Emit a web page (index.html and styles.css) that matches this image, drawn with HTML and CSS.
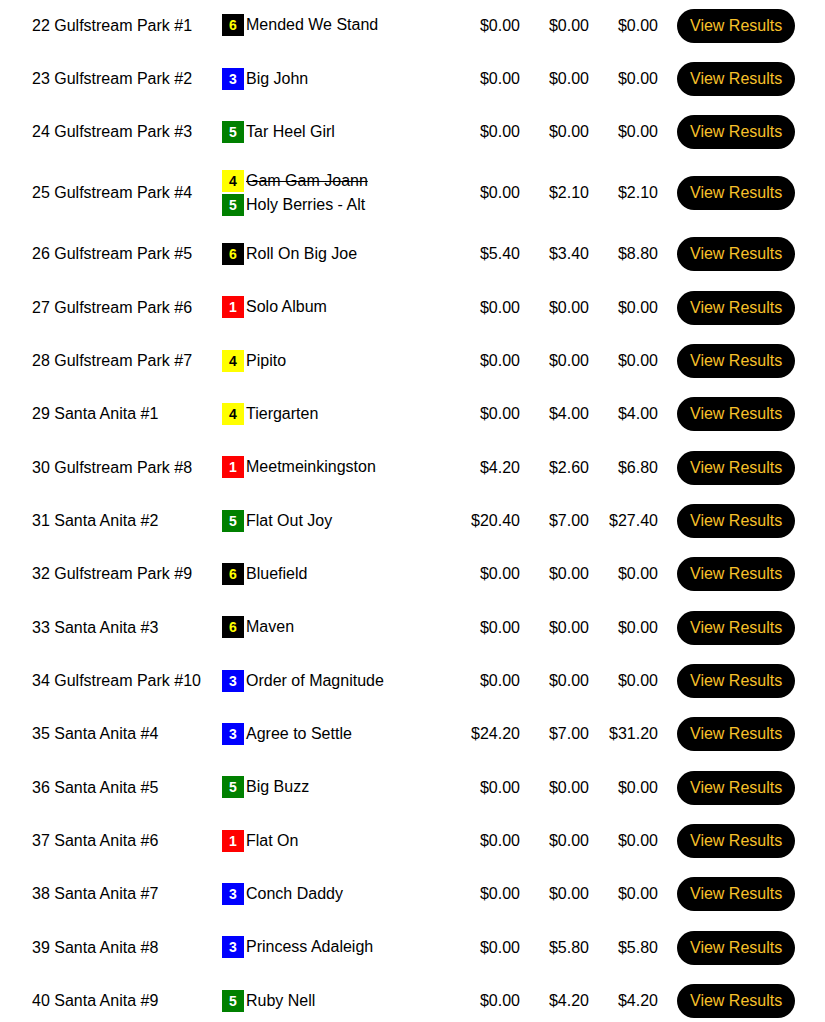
FILE: index.html
```html
<!DOCTYPE html>
<html lang="en">
<head>
<meta charset="utf-8">
<title>Race Results</title>
<link rel="stylesheet" href="styles.css">
</head>
<body>
<table class="results">
  <colgroup>
    <col class="c-race"><col class="c-horse"><col class="c-money1"><col class="c-money"><col class="c-money"><col class="c-btn">
  </colgroup>
  <tbody>
    <tr><td>22 Gulfstream Park #1</td><td><div class="horse"><span class="pp pp6">6</span>Mended We Stand</div></td><td class="m">$0.00</td><td class="m">$0.00</td><td class="m">$0.00</td><td class="b"><a class="btn">View Results</a></td></tr>
    <tr><td>23 Gulfstream Park #2</td><td><div class="horse"><span class="pp pp3">3</span>Big John</div></td><td class="m">$0.00</td><td class="m">$0.00</td><td class="m">$0.00</td><td class="b"><a class="btn">View Results</a></td></tr>
    <tr><td>24 Gulfstream Park #3</td><td><div class="horse"><span class="pp pp5">5</span>Tar Heel Girl</div></td><td class="m">$0.00</td><td class="m">$0.00</td><td class="m">$0.00</td><td class="b"><a class="btn">View Results</a></td></tr>
    <tr><td>25 Gulfstream Park #4</td><td><div class="horse"><span class="pp pp4">4</span><s>Gam Gam Joann</s></div><div class="horse"><span class="pp pp5">5</span>Holy Berries - Alt</div></td><td class="m">$0.00</td><td class="m">$2.10</td><td class="m">$2.10</td><td class="b"><a class="btn">View Results</a></td></tr>
    <tr><td>26 Gulfstream Park #5</td><td><div class="horse"><span class="pp pp6">6</span>Roll On Big Joe</div></td><td class="m">$5.40</td><td class="m">$3.40</td><td class="m">$8.80</td><td class="b"><a class="btn">View Results</a></td></tr>
    <tr><td>27 Gulfstream Park #6</td><td><div class="horse"><span class="pp pp1">1</span>Solo Album</div></td><td class="m">$0.00</td><td class="m">$0.00</td><td class="m">$0.00</td><td class="b"><a class="btn">View Results</a></td></tr>
    <tr><td>28 Gulfstream Park #7</td><td><div class="horse"><span class="pp pp4">4</span>Pipito</div></td><td class="m">$0.00</td><td class="m">$0.00</td><td class="m">$0.00</td><td class="b"><a class="btn">View Results</a></td></tr>
    <tr><td>29 Santa Anita #1</td><td><div class="horse"><span class="pp pp4">4</span>Tiergarten</div></td><td class="m">$0.00</td><td class="m">$4.00</td><td class="m">$4.00</td><td class="b"><a class="btn">View Results</a></td></tr>
    <tr><td>30 Gulfstream Park #8</td><td><div class="horse"><span class="pp pp1">1</span>Meetmeinkingston</div></td><td class="m">$4.20</td><td class="m">$2.60</td><td class="m">$6.80</td><td class="b"><a class="btn">View Results</a></td></tr>
    <tr><td>31 Santa Anita #2</td><td><div class="horse"><span class="pp pp5">5</span>Flat Out Joy</div></td><td class="m">$20.40</td><td class="m">$7.00</td><td class="m">$27.40</td><td class="b"><a class="btn">View Results</a></td></tr>
    <tr><td>32 Gulfstream Park #9</td><td><div class="horse"><span class="pp pp6">6</span>Bluefield</div></td><td class="m">$0.00</td><td class="m">$0.00</td><td class="m">$0.00</td><td class="b"><a class="btn">View Results</a></td></tr>
    <tr><td>33 Santa Anita #3</td><td><div class="horse"><span class="pp pp6">6</span>Maven</div></td><td class="m">$0.00</td><td class="m">$0.00</td><td class="m">$0.00</td><td class="b"><a class="btn">View Results</a></td></tr>
    <tr><td>34 Gulfstream Park #10</td><td><div class="horse"><span class="pp pp3">3</span>Order of Magnitude</div></td><td class="m">$0.00</td><td class="m">$0.00</td><td class="m">$0.00</td><td class="b"><a class="btn">View Results</a></td></tr>
    <tr><td>35 Santa Anita #4</td><td><div class="horse"><span class="pp pp3">3</span>Agree to Settle</div></td><td class="m">$24.20</td><td class="m">$7.00</td><td class="m">$31.20</td><td class="b"><a class="btn">View Results</a></td></tr>
    <tr><td>36 Santa Anita #5</td><td><div class="horse"><span class="pp pp5">5</span>Big Buzz</div></td><td class="m">$0.00</td><td class="m">$0.00</td><td class="m">$0.00</td><td class="b"><a class="btn">View Results</a></td></tr>
    <tr><td>37 Santa Anita #6</td><td><div class="horse"><span class="pp pp1">1</span>Flat On</div></td><td class="m">$0.00</td><td class="m">$0.00</td><td class="m">$0.00</td><td class="b"><a class="btn">View Results</a></td></tr>
    <tr><td>38 Santa Anita #7</td><td><div class="horse"><span class="pp pp3">3</span>Conch Daddy</div></td><td class="m">$0.00</td><td class="m">$0.00</td><td class="m">$0.00</td><td class="b"><a class="btn">View Results</a></td></tr>
    <tr><td>39 Santa Anita #8</td><td><div class="horse"><span class="pp pp3">3</span>Princess Adaleigh</div></td><td class="m">$0.00</td><td class="m">$5.80</td><td class="m">$5.80</td><td class="b"><a class="btn">View Results</a></td></tr>
    <tr><td>40 Santa Anita #9</td><td><div class="horse"><span class="pp pp5">5</span>Ruby Nell</div></td><td class="m">$0.00</td><td class="m">$4.20</td><td class="m">$4.20</td><td class="b"><a class="btn">View Results</a></td></tr>
  </tbody>
</table>
</body>
</html>
```
FILE: styles.css
```css
html, body {
  margin: 0;
  padding: 0;
  background: #fff;
}

body {
  font-family: "Liberation Sans", Arial, sans-serif;
  font-size: 16px;
  color: #000;
}

.results {
  table-layout: fixed;
  border-collapse: collapse;
  margin: -1px 0 0 24px;
  width: 779px;
}

.c-race { width: 190px; }
.c-horse { width: 236px; }
.c-money1 { width: 78px; }
.c-money { width: 69px; }
.c-btn { width: 137px; }

.results td {
  padding: 9.68px 8px;
  vertical-align: middle;
  white-space: nowrap;
}

.results td.m {
  text-align: right;
}

.results td.b {
  padding-left: 11px;
}

.horse {
  line-height: 24.6px;
}

.pp {
  display: inline-block;
  width: 22px;
  height: 22px;
  line-height: 23px;
  margin-right: 2px;
  text-align: center;
  font-size: 14px;
  font-weight: bold;
  vertical-align: baseline;
}

.pp1 { background: #ff0000; color: #fff; }
.pp3 { background: #0000ff; color: #fff; }
.pp4 { background: #ffff00; color: #000; }
.pp5 { background: #008000; color: #fff; }
.pp6 { background: #000; color: #ffff00; }

.btn {
  display: inline-block;
  background: #000;
  color: #f7c12a;
  padding: 8px 13px;
  line-height: 18px;
  border-radius: 17px;
  text-decoration: none;
  cursor: pointer;
}
```
